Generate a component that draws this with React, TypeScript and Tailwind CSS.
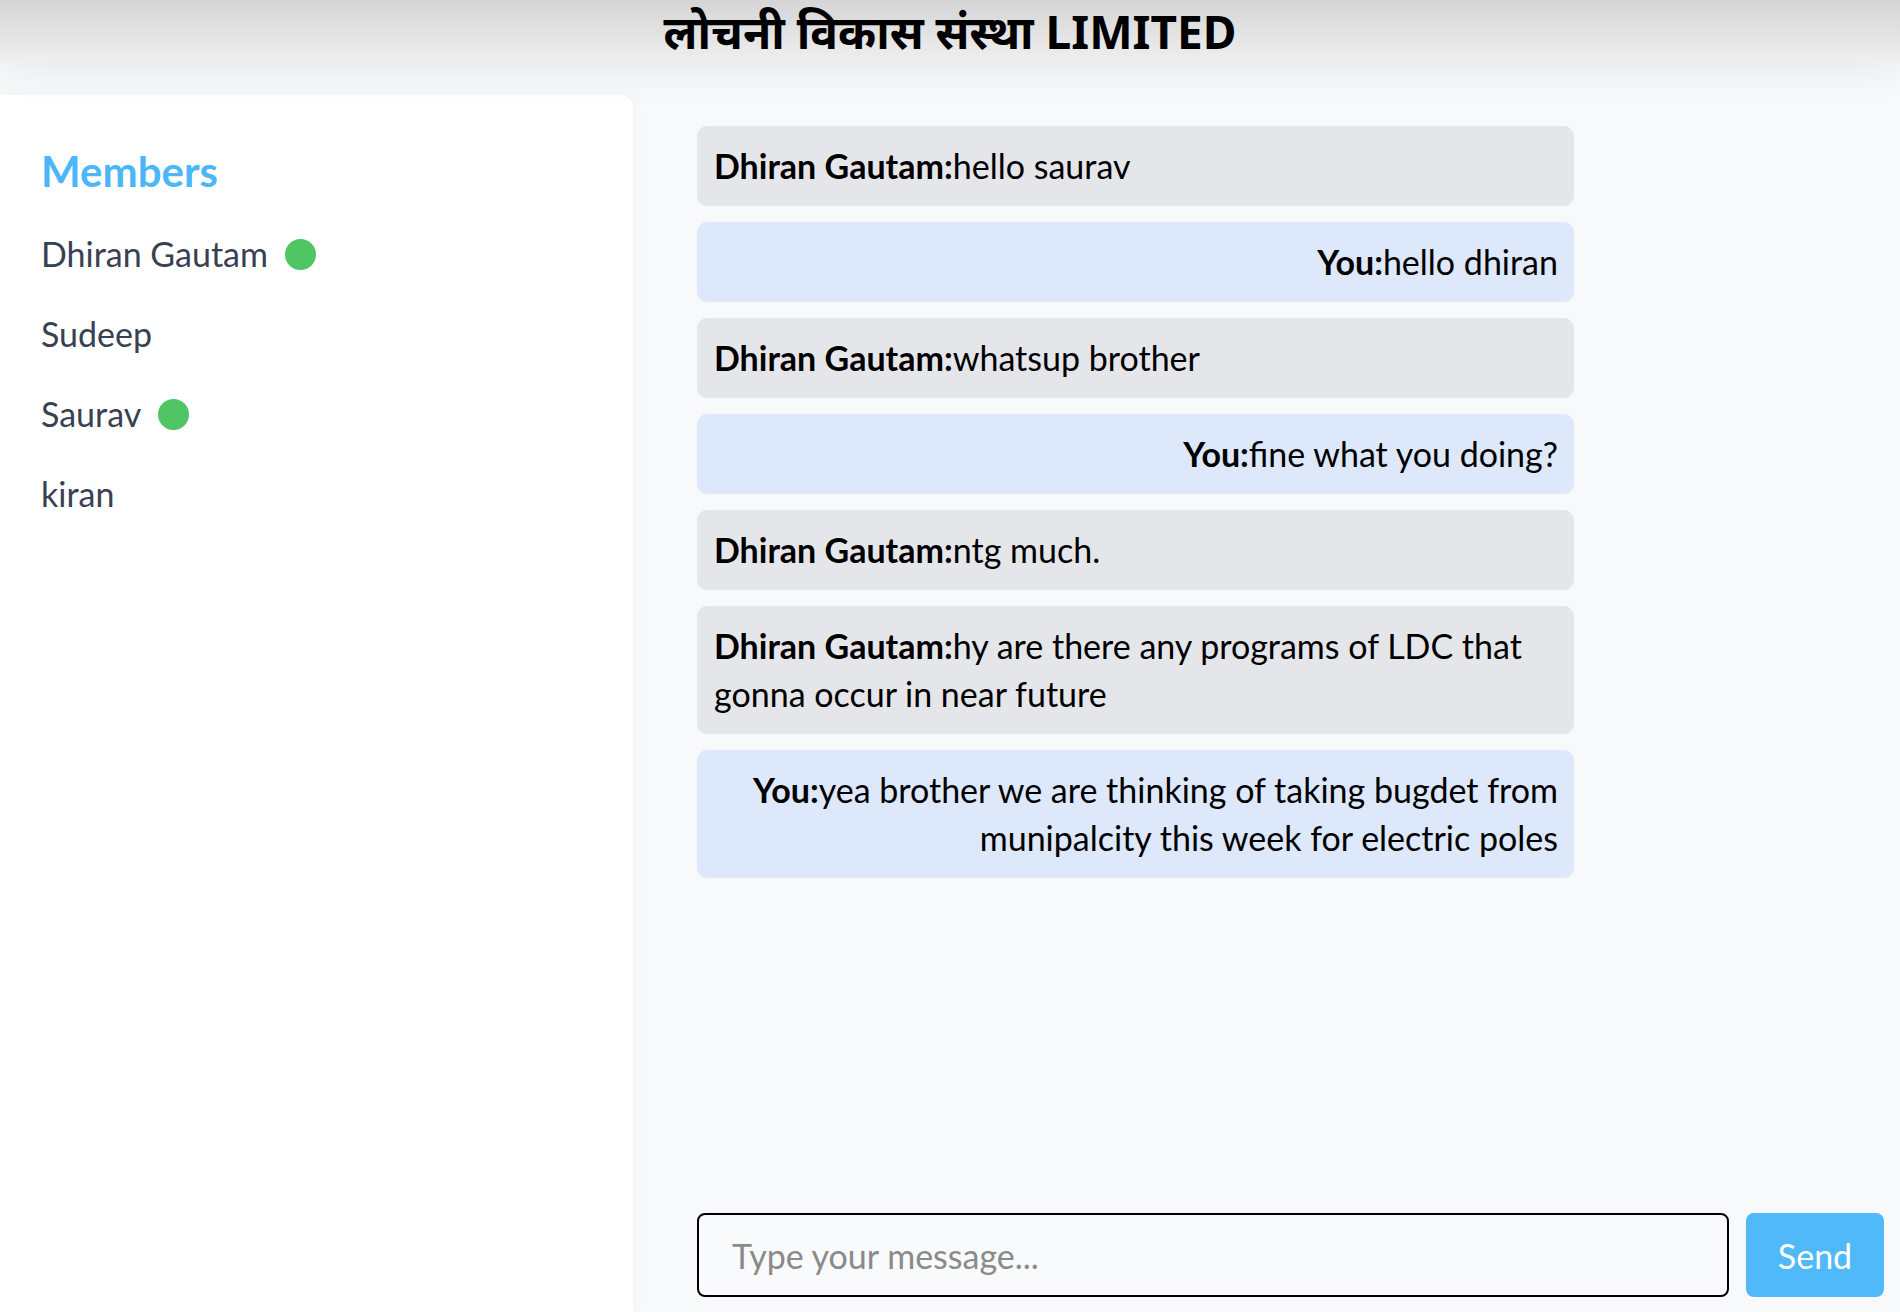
import React from 'react';

interface Message {
  sender: string;
  text: string;
  mine: boolean;
}

const members = [
  { name: 'Dhiran Gautam', online: true },
  { name: 'Sudeep', online: false },
  { name: 'Saurav', online: true },
  { name: 'kiran', online: false },
];

const messages: Message[] = [
  { sender: 'Dhiran Gautam', text: 'hello saurav', mine: false },
  { sender: 'You', text: 'hello dhiran', mine: true },
  { sender: 'Dhiran Gautam', text: 'whatsup brother', mine: false },
  { sender: 'You', text: 'fine what you doing?', mine: true },
  { sender: 'Dhiran Gautam', text: 'ntg much.', mine: false },
  { sender: 'Dhiran Gautam', text: 'hy are there any programs of LDC that gonna occur in near future', mine: false },
  { sender: 'You', text: 'yea brother we are thinking of taking bugdet from munipalcity this week for electric poles', mine: true },
];

const App: React.FC = () => {
  return (
    <div className="h-[1312px] overflow-hidden bg-[#f8f9fb] font-['Lato','Noto_Sans',sans-serif] text-black flex flex-col">
      {/* Header */}
      <header className="relative z-10 h-[62px] shrink-0 bg-linear-to-b from-[#d5d5d5] to-[#efefef] shadow-[0_6px_40px_rgba(0,0,0,0.08)] flex items-center justify-center">
        <h1 className="font-['Noto_Sans','Noto_Sans_Devanagari',sans-serif] font-bold text-[46px] leading-[62px]">
          लोचनी विकास संस्था LIMITED
        </h1>
      </header>

      <div className="flex flex-1 min-h-0">
        {/* Sidebar */}
        <aside className="w-[633px] shrink-0 mt-[33px] bg-white rounded-tr-xl shadow-[2px_0_12px_rgba(0,0,0,0.03)] pl-[41px] pt-[46px]">
          <h2 className="text-[42px] leading-[60px] font-bold text-[#4db6f8]">Members</h2>
          <ul className="mt-[29px] flex flex-col gap-[32px]">
            {members.map((m) => (
              <li key={m.name} className="flex items-center gap-[17px] text-[34px] leading-[48px] text-[#374151]">
                <span>{m.name}</span>
                {m.online && <span className="w-[31px] h-[31px] rounded-full bg-[#4fc564]" />}
              </li>
            ))}
          </ul>
        </aside>

        {/* Chat */}
        <main className="flex-1 flex flex-col pl-[64px] pr-4 pt-[64px] pb-[15px]">
          <div className="flex-1 w-[877px] flex flex-col gap-4">
            {messages.map((msg, i) => (
              <div
                key={i}
                className={`rounded-[10px] py-4 pl-[17px] pr-4 text-[34px] leading-[48px] ${
                  msg.mine ? 'bg-[#dde8fa] text-right' : 'bg-[#e5e6ea] text-left'
                }`}
              >
                <strong className="font-bold">{msg.sender}:</strong>
                {msg.text}
              </div>
            ))}
          </div>

          <div className="flex gap-[17px] h-[84px]">
            <input
              type="text"
              placeholder="Type your message..."
              className="flex-1 border-2 border-black rounded-lg bg-[#f9fafb] px-[33px] text-[34px] placeholder:text-[#8a8a8a] outline-none"
            />
            <button className="w-[138px] rounded-lg bg-[#50b9f9] text-white text-[34px]">Send</button>
          </div>
        </main>
      </div>
    </div>
  );
};

export default App;
